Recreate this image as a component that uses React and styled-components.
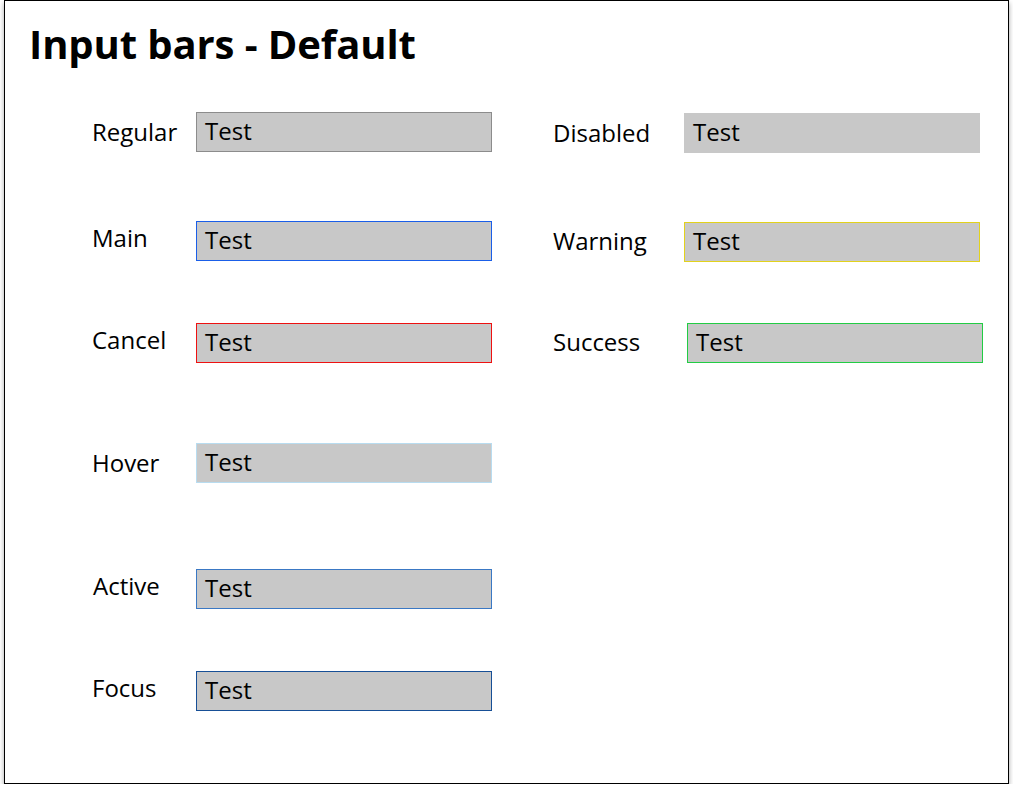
import React from "react";
import styled, { createGlobalStyle } from "styled-components";

const Global = createGlobalStyle`
  html, body { margin: 0; padding: 0; background: #ffffff; }
  body { font-family: "Open Sans", "Noto Sans", sans-serif; color: #000; }
`;

const Frame = styled.div`
  box-sizing: border-box;
  margin-left: 4px;
  width: 1005px;
  height: 784px;
  border: 1px solid #000;
  background: #fff;
  box-shadow: 0 3px 5px rgba(0, 0, 0, 0.35);
  padding: 16px 0 0 24px;
`;

const Title = styled.h1`
  margin: 0;
  font-size: 40px;
  font-weight: 700;
  line-height: 54px;
  letter-spacing: -0.1px;
`;

const Columns = styled.div`
  display: flex;
  padding-left: 63px;
  margin-top: 41px;
`;

const Column = styled.div`
  display: flex;
  flex-direction: column;
  width: ${(p) => p.$width}px;
`;

const Row = styled.div`
  display: flex;
  align-items: center;
  height: 40px;
  margin-top: ${(p) => p.$top}px;
`;

const Label = styled.span`
  box-sizing: border-box;
  width: ${(p) => p.$width}px;
  padding-left: ${(p) => p.$indent || 0}px;
  flex: none;
  font-size: 24px;
  line-height: 32px;
  transform: translateY(${(p) => p.$shift}px);
`;

const Field = styled.div`
  box-sizing: border-box;
  width: 296px;
  height: 40px;
  flex: none;
  background: #c8c8c8;
  border: 1px solid ${(p) => p.$border};
  padding: 0 0 3px 8px;
  display: flex;
  align-items: center;
  font-size: 24px;
  line-height: 32px;
  color: #000;
`;

const left = [
  { label: "Regular", border: "#8c8c8c", top: 0, shift: 0, indent: 0 },
  { label: "Main", border: "#1a5ee8", top: 69, shift: -3, indent: 0 },
  { label: "Cancel", border: "#ee1111", top: 62, shift: -3, indent: 0 },
  { label: "Hover", border: "#b8dcf0", top: 80, shift: 0, indent: 0 },
  { label: "Active", border: "#3a78c4", top: 86, shift: -3, indent: 1 },
  { label: "Focus", border: "#174f96", top: 62, shift: -3, indent: 0 },
];

const right = [
  { label: "Disabled", border: "#c8c8c8", top: 1, shift: 0, w: 131 },
  { label: "Warning", border: "#e2d21c", top: 69, shift: -1, w: 131 },
  { label: "Success", border: "#22cc44", top: 61, shift: -1, w: 134 },
];

export default function App() {
  return (
    <>
      <Global />
      <Frame>
        <Title>Input bars - Default</Title>
        <Columns>
          <Column $width={461}>
            {left.map((r) => (
              <Row key={r.label} $top={r.top}>
                <Label $width={104} $shift={r.shift} $indent={r.indent}>
                  {r.label}
                </Label>
                <Field $border={r.border}>Test</Field>
              </Row>
            ))}
          </Column>
          <Column $width={440}>
            {right.map((r) => (
              <Row key={r.label} $top={r.top}>
                <Label $width={r.w} $shift={r.shift}>
                  {r.label}
                </Label>
                <Field $border={r.border}>Test</Field>
              </Row>
            ))}
          </Column>
        </Columns>
      </Frame>
    </>
  );
}
